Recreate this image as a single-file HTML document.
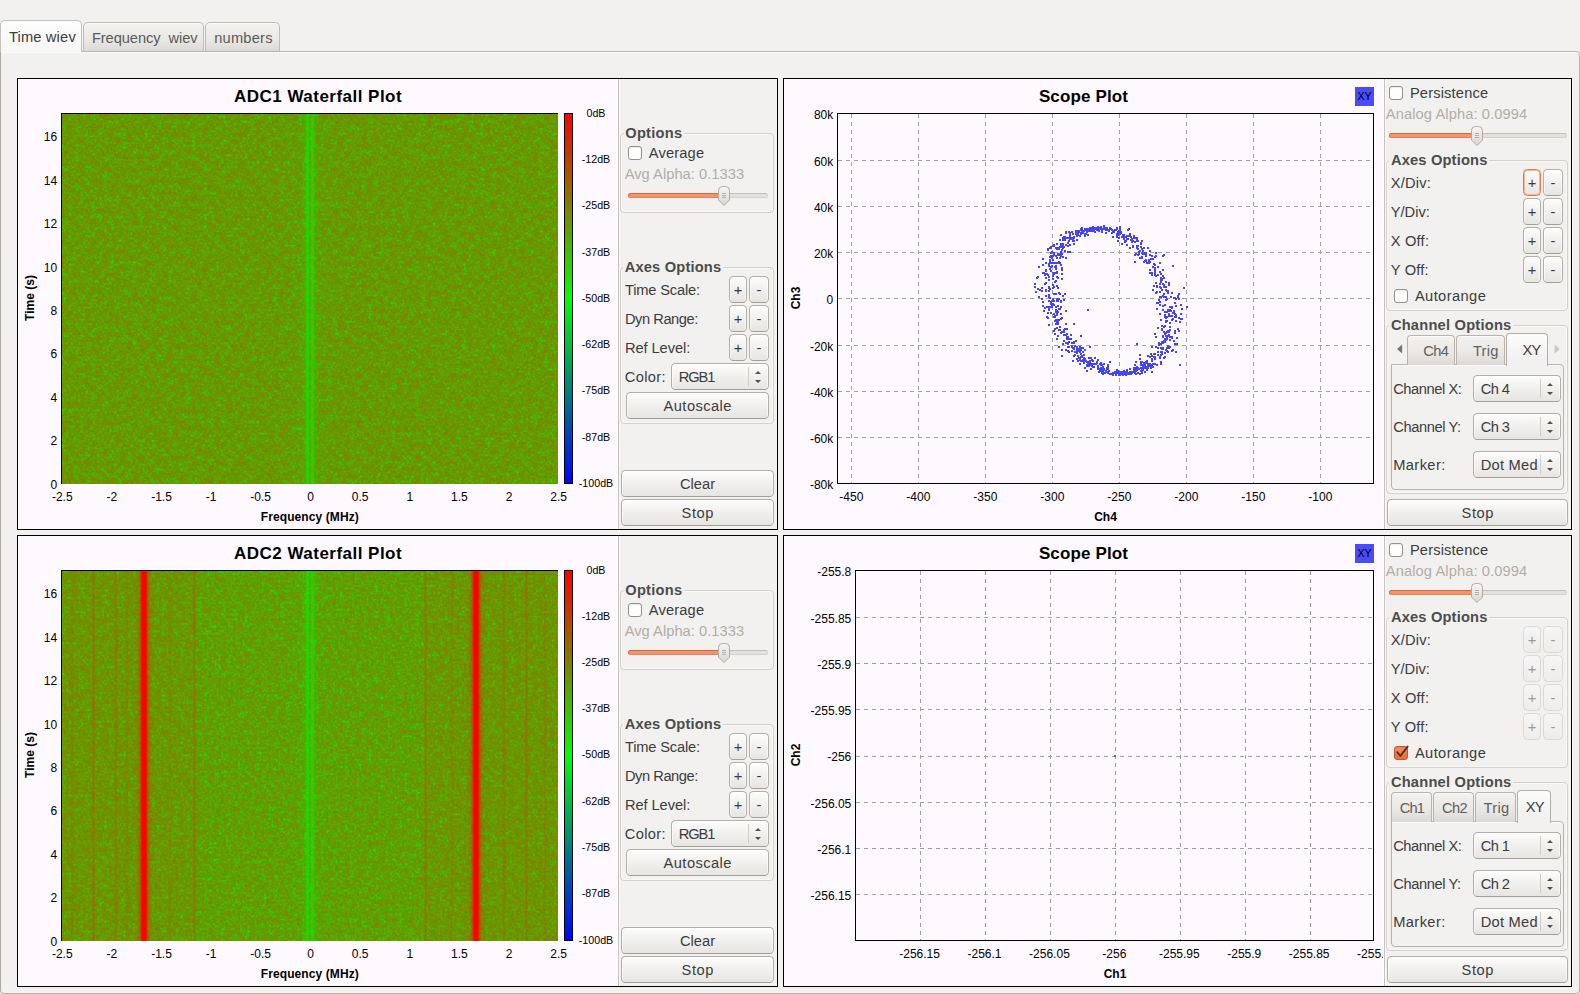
<!DOCTYPE html>
<html lang="en"><head><meta charset="utf-8"><title>Time wiev</title>
<style>
*{box-sizing:border-box;margin:0;padding:0}
html,body{width:1580px;height:994px;overflow:hidden}
body{background:#f2f1f0;font-family:"Liberation Sans",sans-serif;font-size:14.67px;color:#3c3c3c;position:relative}
.a{position:absolute}
.t{position:absolute;white-space:pre;line-height:1;}
.k{color:#000}
.dis{color:#b3ada6}
/* main tab widget */
.pane{position:absolute;left:0;top:51px;width:1580px;height:943px;border:1px solid #b9b4ad;border-left-color:#aeaaa3;border-radius:0 4px 4px 4px;background:#f2f1f0;box-shadow:inset 0 1px 0 #fbfbfa}
.tab{position:absolute;border:1px solid #c1bcb5;border-bottom:none;border-radius:5px 5px 0 0;background:linear-gradient(#f3f2f0,#e9e7e4 60%,#dbd8d4);box-shadow:inset 0 1px 0 #fafaf9}
.tab.on{background:linear-gradient(#fdfdfd,#f6f6f5);border-color:#c6c1bb;z-index:2}
/* plot frames */
.frame{position:absolute;border:1px solid #000;background:#fef9ff;overflow:hidden}
.side{position:absolute;top:0;bottom:0;background:#f2f1f0;border-left:1px solid #c6c2bd;box-shadow:-1px 0 0 #fff,inset 1px 0 0 #f7f7f6}
/* widgets */
.btn{position:absolute;border:1px solid #b3aea8;border-bottom-color:#a49e97;border-radius:4.5px;background:linear-gradient(#fdfdfc,#f2f1ef 45%,#e7e5e2);box-shadow:inset 0 1px 0 #fff,inset 1px 0 0 rgba(255,255,255,.6),inset -1px 0 0 rgba(255,255,255,.6)}
.btn.off{border-color:#dcd9d5;background:linear-gradient(#f6f5f4,#eeedeb);box-shadow:none}
.btn.foc{border-color:#e9764a;box-shadow:inset 0 0 0 1px #f6b79d}
.grp{position:absolute;border:1px solid #d4d0ca;border-radius:4px;box-shadow:inset 0 0 0 1px #f8f8f7}
.cb{position:absolute;width:14px;height:14px;border:1px solid #969089;border-radius:3px;background:linear-gradient(#fff,#fdfdfd);box-shadow:inset 0 1px 1px rgba(0,0,0,.08)}
.cb.on{border-color:#c6562b;background:linear-gradient(#f58e62,#ee6a3c)}
.groove{position:absolute;height:5px;border-radius:3px;border:1px solid #d5d1cc;border-top-color:#c3beb8;background:#e3e1de}
.groove.fill{border-color:#e0693c;border-bottom-color:#e8805a;background:#f2946f}
.sep{position:absolute;width:1px;background:#cfcbc5}
.itab{position:absolute;border:1px solid #b9b3ac;border-bottom:none;border-radius:4px 4px 0 0;background:linear-gradient(#f3f2f0,#e9e7e4 60%,#dcd9d5);box-shadow:inset 0 1px 0 #fafaf9}
.itab.on{background:linear-gradient(#fcfcfb,#f2f1f0 80%);z-index:2;border-color:#b3ada6}
.ipane{position:absolute;border:1px solid #b9b3ac;border-radius:0 4px 4px 4px;background:#f2f1f0;box-shadow:inset 0 1px 0 #fbfbfa}
svg{position:absolute;overflow:visible}
.z3{z-index:4}
</style></head>
<body>
<svg class="a" style="left:0;top:0" width="0" height="0" aria-hidden="true"><defs><linearGradient id="hg" x1="0" y1="0" x2="0" y2="1"><stop offset="0" stop-color="#f7f6f5"/><stop offset="1" stop-color="#d9d6d2"/></linearGradient></defs></svg>
<div class="tab on" style="left:0px;top:20px;width:82px;height:32px;"></div>
<span class="t z3" style="top:30.48px;font-size:14.67px;letter-spacing:0.175px;left:8.90px;">Time wiev</span>
<div class="tab" style="left:83px;top:22px;width:121px;height:30px;"></div>
<span class="t" style="top:31.48px;font-size:14.67px;color:#5a5a5a;letter-spacing:-0.075px;left:91.90px;">Frequency  wiev</span>
<div class="tab" style="left:205px;top:22px;width:75px;height:30px;"></div>
<span class="t" style="top:31.48px;font-size:14.67px;color:#5a5a5a;letter-spacing:0.210px;left:214.20px;">numbers</span>
<div class="pane"></div>
<div class="a" style="left:1px;top:51px;width:80px;height:1px;background:#f6f6f5;z-index:3"></div>
<div class="frame" style="left:17px;top:78px;width:761px;height:452px"><div class="a" style="left:-18px;top:-79px">
<span class="t" style="top:88.11px;font-size:17px;font-weight:700;color:#000;letter-spacing:0.473px;left:234.10px;">ADC1 Waterfall Plot</span>
<div class="a" style="left:61px;top:113px;width:497px;height:371px;border-left:1px solid #000;border-top:1px solid #000;overflow:hidden">
<svg class="a" style="left:0;top:0" width="496" height="370" viewBox="0 0 496 370"><defs><filter id="nz1" x="0" y="0" width="496" height="370" filterUnits="userSpaceOnUse" color-interpolation-filters="sRGB"><feTurbulence type="fractalNoise" baseFrequency="0.42 0.42" numOctaves="2" seed="7"/><feColorMatrix type="matrix" values="1 0 0 0 0 0 1 0 0 0 0 0 1 0 0 0 0 0 0 1" result="a"/><feTurbulence type="fractalNoise" baseFrequency="0.17 0.17" numOctaves="1" seed="47"/><feColorMatrix type="matrix" values="1 0 0 0 0 0 1 0 0 0 0 0 1 0 0 0 0 0 0 1" result="b"/><feComposite in="a" in2="b" operator="arithmetic" k1="0" k2="0.78" k3="0.5" k4="-0.140"/><feComponentTransfer><feFuncR type="table" tableValues="0.018 0.068 0.158 0.268 0.348 0.408 0.453 0.488 0.513 0.528 0.538"/></feComponentTransfer><feColorMatrix type="matrix" values="1 0 0 0 0  -1 0 0 0 1  0 0 0 0 0  0 0 0 0 1"/></filter></defs><rect width="496" height="370" fill="#6b9400"/><rect width="496" height="370" filter="url(#nz1)"/></svg>
<div class="a" style="left:239.00px;top:0;width:18.00px;height:370px;background:linear-gradient(90deg,rgba(10,235,10,0) 0.00%,rgba(10,235,10,0.17) 24.44%,rgba(10,235,10,0.58) 30.56%,rgba(10,235,10,0.62) 41.11%,rgba(10,235,10,0.24) 45.56%,rgba(10,235,10,0.24) 54.44%,rgba(10,235,10,0.62) 58.89%,rgba(10,235,10,0.58) 69.44%,rgba(10,235,10,0.17) 75.56%,rgba(10,235,10,0) 100.00%)"></div>
<div class="a" style="left:218.00px;top:0;width:60.00px;height:370px;background:linear-gradient(90deg,rgba(10,235,10,0) 0.00%,rgba(10,235,10,0.05) 33.33%,rgba(10,235,10,0.05) 66.67%,rgba(10,235,10,0) 100.00%)"></div>
</div>
<span class="t" style="top:478.64px;font-size:12px;color:#000;left:57.20px;transform:translateX(-100%);">0</span>
<span class="t" style="top:435.24px;font-size:12px;color:#000;left:57.20px;transform:translateX(-100%);">2</span>
<span class="t" style="top:391.84px;font-size:12px;color:#000;left:57.20px;transform:translateX(-100%);">4</span>
<span class="t" style="top:348.44px;font-size:12px;color:#000;left:57.20px;transform:translateX(-100%);">6</span>
<span class="t" style="top:305.04px;font-size:12px;color:#000;left:57.20px;transform:translateX(-100%);">8</span>
<span class="t" style="top:261.64px;font-size:12px;color:#000;left:57.20px;transform:translateX(-100%);">10</span>
<span class="t" style="top:218.24px;font-size:12px;color:#000;left:57.20px;transform:translateX(-100%);">12</span>
<span class="t" style="top:174.84px;font-size:12px;color:#000;left:57.20px;transform:translateX(-100%);">14</span>
<span class="t" style="top:131.44px;font-size:12px;color:#000;left:57.20px;transform:translateX(-100%);">16</span>
<span class="t" style="top:491.24px;font-size:12px;color:#000;left:62.30px;transform:translateX(-50%);">-2.5</span>
<span class="t" style="top:491.24px;font-size:12px;color:#000;left:111.90px;transform:translateX(-50%);">-2</span>
<span class="t" style="top:491.24px;font-size:12px;color:#000;left:161.50px;transform:translateX(-50%);">-1.5</span>
<span class="t" style="top:491.24px;font-size:12px;color:#000;left:211.10px;transform:translateX(-50%);">-1</span>
<span class="t" style="top:491.24px;font-size:12px;color:#000;left:260.70px;transform:translateX(-50%);">-0.5</span>
<span class="t" style="top:491.24px;font-size:12px;color:#000;left:310.60px;transform:translateX(-50%);">0</span>
<span class="t" style="top:491.24px;font-size:12px;color:#000;left:360.20px;transform:translateX(-50%);">0.5</span>
<span class="t" style="top:491.24px;font-size:12px;color:#000;left:409.80px;transform:translateX(-50%);">1</span>
<span class="t" style="top:491.24px;font-size:12px;color:#000;left:459.40px;transform:translateX(-50%);">1.5</span>
<span class="t" style="top:491.24px;font-size:12px;color:#000;left:509.00px;transform:translateX(-50%);">2</span>
<span class="t" style="top:491.24px;font-size:12px;color:#000;left:558.60px;transform:translateX(-50%);">2.5</span>
<span class="t" style="top:510.64px;font-size:12px;font-weight:700;color:#000;letter-spacing:0.087px;left:309.84px;transform:translateX(-50%);">Frequency (MHz)</span>
<span class="t k" style="left:30.3px;top:298px;font-size:12px;font-weight:700;transform:translate(-50%,-50%) rotate(-90deg)">Time (s)</span>
<div class="a" style="left:564px;top:113px;width:9px;height:371px;border:1px solid #000;background:linear-gradient(#ff0000,#00ff00 50%,#0000ff)"></div>
<span class="t" style="top:107.87px;font-size:10.67px;color:#000;left:596.00px;transform:translateX(-50%);">0dB</span>
<span class="t" style="top:154.12px;font-size:10.67px;color:#000;left:596.00px;transform:translateX(-50%);">-12dB</span>
<span class="t" style="top:200.37px;font-size:10.67px;color:#000;left:596.00px;transform:translateX(-50%);">-25dB</span>
<span class="t" style="top:246.62px;font-size:10.67px;color:#000;left:596.00px;transform:translateX(-50%);">-37dB</span>
<span class="t" style="top:292.87px;font-size:10.67px;color:#000;left:596.00px;transform:translateX(-50%);">-50dB</span>
<span class="t" style="top:339.12px;font-size:10.67px;color:#000;left:596.00px;transform:translateX(-50%);">-62dB</span>
<span class="t" style="top:385.37px;font-size:10.67px;color:#000;left:596.00px;transform:translateX(-50%);">-75dB</span>
<span class="t" style="top:431.62px;font-size:10.67px;color:#000;left:596.00px;transform:translateX(-50%);">-87dB</span>
<span class="t" style="top:477.87px;font-size:10.67px;color:#000;left:596.00px;transform:translateX(-50%);">-100dB</span>
<div class="side" style="left:618px;top:79px;width:159px;height:450px"></div>
<div class="grp" style="left:620px;top:133px;width:154px;height:80px;"></div>
<div class="a" style="left:623.8px;top:131px;width:60px;height:5px;background:#f2f1f0"></div>
<span class="t" style="top:126.08px;font-size:14.67px;font-weight:700;color:#4c4c4c;letter-spacing:0.232px;left:625.30px;">Options</span>
<div class="cb" style="left:628px;top:146px"></div>
<span class="t" style="top:145.98px;font-size:14.67px;letter-spacing:0.182px;left:648.70px;">Average</span>
<span class="t" style="top:166.98px;font-size:14.67px;color:#b3ada6;letter-spacing:0.040px;left:624.70px;">Avg Alpha: 0.1333</span>
<div class="groove" style="left:628px;top:193px;width:140px"></div>
<div class="groove fill" style="left:628px;top:193px;width:96px"></div>
<svg class="a" style="left:718px;top:186px" width="12" height="20"><path d="M4.5 0.5 H7.5 Q11.5 0.5 11.5 4.5 V14 L6 19.5 L0.5 14 V4.5 Q0.5 0.5 4.5 0.5 Z" fill="url(#hg)" stroke="#b1aba4" stroke-width="1"/><path d="M4 7.5 H8 M4 9.5 H8 M4 11.5 H8" stroke="#b5afa8" stroke-width="1"/></svg>
<div class="grp" style="left:620px;top:267px;width:154px;height:157px;"></div>
<div class="a" style="left:623.2px;top:265px;width:99.8px;height:5px;background:#f2f1f0"></div>
<span class="t" style="top:259.88px;font-size:14.67px;font-weight:700;color:#4c4c4c;letter-spacing:0.176px;left:624.70px;">Axes Options</span>
<span class="t" style="top:283.18px;font-size:14.67px;letter-spacing:-0.168px;left:624.90px;">Time Scale:</span>
<div class="btn" style="left:729px;top:276px;width:18px;height:27px;"></div>
<div class="btn" style="left:749px;top:276px;width:20px;height:27px;"></div>
<span class="t" style="top:282.78px;font-size:14.67px;left:738.00px;transform:translateX(-50%);">+</span>
<span class="t" style="top:282.78px;font-size:14.67px;left:759.00px;transform:translateX(-50%);">-</span>
<span class="t" style="top:312.18px;font-size:14.67px;letter-spacing:-0.441px;left:624.90px;">Dyn Range:</span>
<div class="btn" style="left:729px;top:305px;width:18px;height:27px;"></div>
<div class="btn" style="left:749px;top:305px;width:20px;height:27px;"></div>
<span class="t" style="top:311.78px;font-size:14.67px;left:738.00px;transform:translateX(-50%);">+</span>
<span class="t" style="top:311.78px;font-size:14.67px;left:759.00px;transform:translateX(-50%);">-</span>
<span class="t" style="top:341.18px;font-size:14.67px;letter-spacing:-0.070px;left:624.90px;">Ref Level:</span>
<div class="btn" style="left:729px;top:334px;width:18px;height:27px;"></div>
<div class="btn" style="left:749px;top:334px;width:20px;height:27px;"></div>
<span class="t" style="top:340.78px;font-size:14.67px;left:738.00px;transform:translateX(-50%);">+</span>
<span class="t" style="top:340.78px;font-size:14.67px;left:759.00px;transform:translateX(-50%);">-</span>
<span class="t" style="top:370.48px;font-size:14.67px;letter-spacing:0.382px;left:624.70px;">Color:</span>
<div class="btn" style="left:671px;top:363px;width:98px;height:27px;"></div>
<span class="t" style="top:370.08px;font-size:14.67px;letter-spacing:-1.130px;left:678.80px;">RGB1</span>
<div class="sep" style="left:748px;top:367px;height:19px"></div>
<svg class="a" style="left:754.25px;top:363px" width="8" height="27"><path d="M1 11 L4 8 L7 11 Z M1 17 L4 20 L7 17 Z" fill="#524e4a"/></svg>
<div class="btn " style="left:626px;top:392px;width:143px;height:27px;"></div>
<span class="t" style="top:398.98px;font-size:14.67px;letter-spacing:0.436px;left:697.72px;transform:translateX(-50%);">Autoscale</span>
<div class="btn " style="left:621px;top:470px;width:153px;height:27px;"></div>
<span class="t" style="top:476.98px;font-size:14.67px;letter-spacing:0.034px;left:697.52px;transform:translateX(-50%);">Clear</span>
<div class="btn " style="left:621px;top:499px;width:153px;height:27px;"></div>
<span class="t" style="top:505.98px;font-size:14.67px;letter-spacing:0.561px;left:697.78px;transform:translateX(-50%);">Stop</span>
</div></div>
<div class="frame" style="left:17px;top:535px;width:761px;height:452px"><div class="a" style="left:-18px;top:-536px">
<span class="t" style="top:545.11px;font-size:17px;font-weight:700;color:#000;letter-spacing:0.473px;left:234.10px;">ADC2 Waterfall Plot</span>
<div class="a" style="left:61px;top:570px;width:497px;height:371px;border-left:1px solid #000;border-top:1px solid #000;overflow:hidden">
<svg class="a" style="left:0;top:0" width="496" height="370" viewBox="0 0 496 370"><defs><filter id="nz2" x="0" y="0" width="496" height="370" filterUnits="userSpaceOnUse" color-interpolation-filters="sRGB"><feTurbulence type="fractalNoise" baseFrequency="0.42 0.42" numOctaves="2" seed="23"/><feColorMatrix type="matrix" values="1 0 0 0 0 0 1 0 0 0 0 0 1 0 0 0 0 0 0 1" result="a"/><feTurbulence type="fractalNoise" baseFrequency="0.17 0.17" numOctaves="1" seed="63"/><feColorMatrix type="matrix" values="1 0 0 0 0 0 1 0 0 0 0 0 1 0 0 0 0 0 0 1" result="b"/><feComposite in="a" in2="b" operator="arithmetic" k1="0" k2="0.78" k3="0.5" k4="-0.140"/><feComponentTransfer><feFuncR type="table" tableValues="0.000 0.045 0.135 0.245 0.325 0.385 0.430 0.465 0.490 0.505 0.515"/></feComponentTransfer><feColorMatrix type="matrix" values="1 0 0 0 0  -1 0 0 0 1  0 0 0 0 0  0 0 0 0 1"/></filter></defs><rect width="496" height="370" fill="#6b9400"/><rect width="496" height="370" filter="url(#nz2)"/></svg>
<div class="a" style="left:239.00px;top:0;width:18.00px;height:370px;background:linear-gradient(90deg,rgba(10,235,10,0) 0.00%,rgba(10,235,10,0.17) 24.44%,rgba(10,235,10,0.58) 30.56%,rgba(10,235,10,0.62) 41.11%,rgba(10,235,10,0.24) 45.56%,rgba(10,235,10,0.24) 54.44%,rgba(10,235,10,0.62) 58.89%,rgba(10,235,10,0.58) 69.44%,rgba(10,235,10,0.17) 75.56%,rgba(10,235,10,0) 100.00%)"></div>
<div class="a" style="left:218.00px;top:0;width:60.00px;height:370px;background:linear-gradient(90deg,rgba(10,235,10,0) 0.00%,rgba(10,235,10,0.05) 33.33%,rgba(10,235,10,0.05) 66.67%,rgba(10,235,10,0) 100.00%)"></div>
<div class="a" style="left:0.00px;top:0;width:133.50px;height:370px;background:linear-gradient(90deg,rgba(185,85,0,0.13) 0.00%,rgba(185,85,0,0.1) 98.13%,rgba(185,85,0,0) 100.00%)"></div>
<div class="a" style="left:362.50px;top:0;width:133.50px;height:370px;background:linear-gradient(90deg,rgba(185,85,0,0) 0.00%,rgba(185,85,0,0.1) 1.87%,rgba(185,85,0,0.13) 100.00%)"></div>
<div class="a" style="left:73.30px;top:0;width:18.00px;height:370px;background:linear-gradient(90deg,rgba(255,0,0,0) 0.00%,rgba(255,0,0,0.14) 19.44%,rgba(255,0,0,0.36) 28.89%,rgba(255,0,0,0.72) 35.00%,rgba(255,0,0,1) 40.56%,rgba(255,0,0,1) 59.44%,rgba(255,0,0,0.72) 65.00%,rgba(255,0,0,0.36) 71.11%,rgba(255,0,0,0.14) 80.56%,rgba(255,0,0,0) 100.00%)"></div>
<div class="a" style="left:405.00px;top:0;width:18.00px;height:370px;background:linear-gradient(90deg,rgba(255,0,0,0) 0.00%,rgba(255,0,0,0.14) 19.44%,rgba(255,0,0,0.36) 28.89%,rgba(255,0,0,0.72) 35.00%,rgba(255,0,0,1) 40.56%,rgba(255,0,0,1) 59.44%,rgba(255,0,0,0.72) 65.00%,rgba(255,0,0,0.36) 71.11%,rgba(255,0,0,0.14) 80.56%,rgba(255,0,0,0) 100.00%)"></div>
<div class="a" style="left:29.80px;top:0;width:3.20px;height:370px;background:linear-gradient(90deg,rgba(175,85,0,0) 0.00%,rgba(175,85,0,0.5) 31.25%,rgba(175,85,0,0.5) 68.75%,rgba(175,85,0,0) 100.00%)"></div>
<div class="a" style="left:52.40px;top:0;width:3.20px;height:370px;background:linear-gradient(90deg,rgba(175,85,0,0) 0.00%,rgba(175,85,0,0.3) 31.25%,rgba(175,85,0,0.3) 68.75%,rgba(175,85,0,0) 100.00%)"></div>
<div class="a" style="left:63.40px;top:0;width:3.20px;height:370px;background:linear-gradient(90deg,rgba(175,85,0,0) 0.00%,rgba(175,85,0,0.2) 31.25%,rgba(175,85,0,0.2) 68.75%,rgba(175,85,0,0) 100.00%)"></div>
<div class="a" style="left:131.00px;top:0;width:3.20px;height:370px;background:linear-gradient(90deg,rgba(175,85,0,0) 0.00%,rgba(175,85,0,0.5) 31.25%,rgba(175,85,0,0.5) 68.75%,rgba(175,85,0,0) 100.00%)"></div>
<div class="a" style="left:362.30px;top:0;width:3.20px;height:370px;background:linear-gradient(90deg,rgba(175,85,0,0) 0.00%,rgba(175,85,0,0.5) 31.25%,rgba(175,85,0,0.5) 68.75%,rgba(175,85,0,0) 100.00%)"></div>
<div class="a" style="left:440.40px;top:0;width:3.20px;height:370px;background:linear-gradient(90deg,rgba(175,85,0,0) 0.00%,rgba(175,85,0,0.3) 31.25%,rgba(175,85,0,0.3) 68.75%,rgba(175,85,0,0) 100.00%)"></div>
<div class="a" style="left:463.20px;top:0;width:3.20px;height:370px;background:linear-gradient(90deg,rgba(175,85,0,0) 0.00%,rgba(175,85,0,0.45) 31.25%,rgba(175,85,0,0.45) 68.75%,rgba(175,85,0,0) 100.00%)"></div>
<div class="a" style="left:8.40px;top:0;width:3.20px;height:370px;background:linear-gradient(90deg,rgba(175,85,0,0) 0.00%,rgba(175,85,0,0.2) 31.25%,rgba(175,85,0,0.2) 68.75%,rgba(175,85,0,0) 100.00%)"></div>
<div class="a" style="left:106.40px;top:0;width:3.20px;height:370px;background:linear-gradient(90deg,rgba(175,85,0,0) 0.00%,rgba(175,85,0,0.15) 31.25%,rgba(175,85,0,0.15) 68.75%,rgba(175,85,0,0) 100.00%)"></div>
<div class="a" style="left:388.40px;top:0;width:3.20px;height:370px;background:linear-gradient(90deg,rgba(175,85,0,0) 0.00%,rgba(175,85,0,0.2) 31.25%,rgba(175,85,0,0.2) 68.75%,rgba(175,85,0,0) 100.00%)"></div>
<div class="a" style="left:481.40px;top:0;width:3.20px;height:370px;background:linear-gradient(90deg,rgba(175,85,0,0) 0.00%,rgba(175,85,0,0.2) 31.25%,rgba(175,85,0,0.2) 68.75%,rgba(175,85,0,0) 100.00%)"></div>
</div>
<span class="t" style="top:935.64px;font-size:12px;color:#000;left:57.20px;transform:translateX(-100%);">0</span>
<span class="t" style="top:892.24px;font-size:12px;color:#000;left:57.20px;transform:translateX(-100%);">2</span>
<span class="t" style="top:848.84px;font-size:12px;color:#000;left:57.20px;transform:translateX(-100%);">4</span>
<span class="t" style="top:805.44px;font-size:12px;color:#000;left:57.20px;transform:translateX(-100%);">6</span>
<span class="t" style="top:762.04px;font-size:12px;color:#000;left:57.20px;transform:translateX(-100%);">8</span>
<span class="t" style="top:718.64px;font-size:12px;color:#000;left:57.20px;transform:translateX(-100%);">10</span>
<span class="t" style="top:675.24px;font-size:12px;color:#000;left:57.20px;transform:translateX(-100%);">12</span>
<span class="t" style="top:631.84px;font-size:12px;color:#000;left:57.20px;transform:translateX(-100%);">14</span>
<span class="t" style="top:588.44px;font-size:12px;color:#000;left:57.20px;transform:translateX(-100%);">16</span>
<span class="t" style="top:948.24px;font-size:12px;color:#000;left:62.30px;transform:translateX(-50%);">-2.5</span>
<span class="t" style="top:948.24px;font-size:12px;color:#000;left:111.90px;transform:translateX(-50%);">-2</span>
<span class="t" style="top:948.24px;font-size:12px;color:#000;left:161.50px;transform:translateX(-50%);">-1.5</span>
<span class="t" style="top:948.24px;font-size:12px;color:#000;left:211.10px;transform:translateX(-50%);">-1</span>
<span class="t" style="top:948.24px;font-size:12px;color:#000;left:260.70px;transform:translateX(-50%);">-0.5</span>
<span class="t" style="top:948.24px;font-size:12px;color:#000;left:310.60px;transform:translateX(-50%);">0</span>
<span class="t" style="top:948.24px;font-size:12px;color:#000;left:360.20px;transform:translateX(-50%);">0.5</span>
<span class="t" style="top:948.24px;font-size:12px;color:#000;left:409.80px;transform:translateX(-50%);">1</span>
<span class="t" style="top:948.24px;font-size:12px;color:#000;left:459.40px;transform:translateX(-50%);">1.5</span>
<span class="t" style="top:948.24px;font-size:12px;color:#000;left:509.00px;transform:translateX(-50%);">2</span>
<span class="t" style="top:948.24px;font-size:12px;color:#000;left:558.60px;transform:translateX(-50%);">2.5</span>
<span class="t" style="top:967.64px;font-size:12px;font-weight:700;color:#000;letter-spacing:0.087px;left:309.84px;transform:translateX(-50%);">Frequency (MHz)</span>
<span class="t k" style="left:30.3px;top:755px;font-size:12px;font-weight:700;transform:translate(-50%,-50%) rotate(-90deg)">Time (s)</span>
<div class="a" style="left:564px;top:570px;width:9px;height:371px;border:1px solid #000;background:linear-gradient(#ff0000,#00ff00 50%,#0000ff)"></div>
<span class="t" style="top:564.87px;font-size:10.67px;color:#000;left:596.00px;transform:translateX(-50%);">0dB</span>
<span class="t" style="top:610.52px;font-size:10.67px;color:#000;left:596.00px;transform:translateX(-50%);">-12dB</span>
<span class="t" style="top:656.77px;font-size:10.67px;color:#000;left:596.00px;transform:translateX(-50%);">-25dB</span>
<span class="t" style="top:703.02px;font-size:10.67px;color:#000;left:596.00px;transform:translateX(-50%);">-37dB</span>
<span class="t" style="top:749.27px;font-size:10.67px;color:#000;left:596.00px;transform:translateX(-50%);">-50dB</span>
<span class="t" style="top:795.52px;font-size:10.67px;color:#000;left:596.00px;transform:translateX(-50%);">-62dB</span>
<span class="t" style="top:841.77px;font-size:10.67px;color:#000;left:596.00px;transform:translateX(-50%);">-75dB</span>
<span class="t" style="top:888.02px;font-size:10.67px;color:#000;left:596.00px;transform:translateX(-50%);">-87dB</span>
<span class="t" style="top:934.87px;font-size:10.67px;color:#000;left:596.00px;transform:translateX(-50%);">-100dB</span>
<div class="side" style="left:618px;top:536px;width:159px;height:450px"></div>
<div class="grp" style="left:620px;top:590px;width:154px;height:80px;"></div>
<div class="a" style="left:623.8px;top:588px;width:60px;height:5px;background:#f2f1f0"></div>
<span class="t" style="top:583.08px;font-size:14.67px;font-weight:700;color:#4c4c4c;letter-spacing:0.232px;left:625.30px;">Options</span>
<div class="cb" style="left:628px;top:603px"></div>
<span class="t" style="top:602.98px;font-size:14.67px;letter-spacing:0.182px;left:648.70px;">Average</span>
<span class="t" style="top:623.98px;font-size:14.67px;color:#b3ada6;letter-spacing:0.040px;left:624.70px;">Avg Alpha: 0.1333</span>
<div class="groove" style="left:628px;top:650px;width:140px"></div>
<div class="groove fill" style="left:628px;top:650px;width:96px"></div>
<svg class="a" style="left:718px;top:643px" width="12" height="20"><path d="M4.5 0.5 H7.5 Q11.5 0.5 11.5 4.5 V14 L6 19.5 L0.5 14 V4.5 Q0.5 0.5 4.5 0.5 Z" fill="url(#hg)" stroke="#b1aba4" stroke-width="1"/><path d="M4 7.5 H8 M4 9.5 H8 M4 11.5 H8" stroke="#b5afa8" stroke-width="1"/></svg>
<div class="grp" style="left:620px;top:724px;width:154px;height:157px;"></div>
<div class="a" style="left:623.2px;top:722px;width:99.8px;height:5px;background:#f2f1f0"></div>
<span class="t" style="top:716.88px;font-size:14.67px;font-weight:700;color:#4c4c4c;letter-spacing:0.176px;left:624.70px;">Axes Options</span>
<span class="t" style="top:740.18px;font-size:14.67px;letter-spacing:-0.168px;left:624.90px;">Time Scale:</span>
<div class="btn" style="left:729px;top:733px;width:18px;height:27px;"></div>
<div class="btn" style="left:749px;top:733px;width:20px;height:27px;"></div>
<span class="t" style="top:739.78px;font-size:14.67px;left:738.00px;transform:translateX(-50%);">+</span>
<span class="t" style="top:739.78px;font-size:14.67px;left:759.00px;transform:translateX(-50%);">-</span>
<span class="t" style="top:769.18px;font-size:14.67px;letter-spacing:-0.441px;left:624.90px;">Dyn Range:</span>
<div class="btn" style="left:729px;top:762px;width:18px;height:27px;"></div>
<div class="btn" style="left:749px;top:762px;width:20px;height:27px;"></div>
<span class="t" style="top:768.78px;font-size:14.67px;left:738.00px;transform:translateX(-50%);">+</span>
<span class="t" style="top:768.78px;font-size:14.67px;left:759.00px;transform:translateX(-50%);">-</span>
<span class="t" style="top:798.18px;font-size:14.67px;letter-spacing:-0.070px;left:624.90px;">Ref Level:</span>
<div class="btn" style="left:729px;top:791px;width:18px;height:27px;"></div>
<div class="btn" style="left:749px;top:791px;width:20px;height:27px;"></div>
<span class="t" style="top:797.78px;font-size:14.67px;left:738.00px;transform:translateX(-50%);">+</span>
<span class="t" style="top:797.78px;font-size:14.67px;left:759.00px;transform:translateX(-50%);">-</span>
<span class="t" style="top:827.48px;font-size:14.67px;letter-spacing:0.382px;left:624.70px;">Color:</span>
<div class="btn" style="left:671px;top:820px;width:98px;height:27px;"></div>
<span class="t" style="top:827.08px;font-size:14.67px;letter-spacing:-1.130px;left:678.80px;">RGB1</span>
<div class="sep" style="left:748px;top:824px;height:19px"></div>
<svg class="a" style="left:754.25px;top:820px" width="8" height="27"><path d="M1 11 L4 8 L7 11 Z M1 17 L4 20 L7 17 Z" fill="#524e4a"/></svg>
<div class="btn " style="left:626px;top:849px;width:143px;height:27px;"></div>
<span class="t" style="top:855.98px;font-size:14.67px;letter-spacing:0.436px;left:697.72px;transform:translateX(-50%);">Autoscale</span>
<div class="btn " style="left:621px;top:927px;width:153px;height:27px;"></div>
<span class="t" style="top:933.98px;font-size:14.67px;letter-spacing:0.034px;left:697.52px;transform:translateX(-50%);">Clear</span>
<div class="btn " style="left:621px;top:956px;width:153px;height:27px;"></div>
<span class="t" style="top:962.98px;font-size:14.67px;letter-spacing:0.561px;left:697.78px;transform:translateX(-50%);">Stop</span>
</div></div>
<div class="frame" style="left:783px;top:78px;width:789px;height:452px"><div class="a" style="left:-784px;top:-79px">
<span class="t" style="top:88.11px;font-size:17px;font-weight:700;color:#000;letter-spacing:0.144px;left:1038.90px;">Scope Plot</span>
<div class="a" style="left:1355px;top:87px;width:19px;height:19px;background:#4b4bfc"></div>
<span class="t" style="top:91.17px;font-size:10.67px;color:#000;left:1364.50px;transform:translateX(-50%);">XY</span>
<svg class="a" style="left:837px;top:113px" width="537" height="371" shape-rendering="crispEdges"><path d="M14.5 1V370M81.5 1V370M148.5 1V370M215.5 1V370M282.5 1V370M349.5 1V370M416.5 1V370M483.5 1V370" stroke="#a0a0a4" stroke-width="1" stroke-dasharray="4 4" fill="none"/><path d="M1 47.5H536M1 93.5H536M1 139.5H536M1 185.5H536M1 232.5H536M1 278.5H536M1 324.5H536" stroke="#a0a0a4" stroke-width="1" stroke-dasharray="4 4" fill="none"/><rect x="0.5" y="0.5" width="536" height="370" fill="none" stroke="#000" stroke-width="1"/></svg>
<svg class="a" style="left:0;top:0" width="1580" height="600" shape-rendering="crispEdges"><path d="M1069 251h2v2h-2zM1071 238h2v2h-2zM1143 261h2v2h-2zM1043 310h2v2h-2zM1161 325h2v2h-2zM1101 367h2v2h-2zM1094 231h2v2h-2zM1180 313h2v2h-2zM1140 243h2v2h-2zM1056 319h2v2h-2zM1099 363h2v2h-2zM1152 363h2v2h-2zM1125 240h2v2h-2zM1175 298h2v2h-2zM1144 252h2v2h-2zM1091 230h2v2h-2zM1178 317h2v2h-2zM1064 236h2v2h-2zM1160 287h2v2h-2zM1060 252h2v2h-2zM1087 362h2v2h-2zM1167 330h2v2h-2zM1050 301h2v2h-2zM1052 284h2v2h-2zM1151 272h2v2h-2zM1162 335h2v2h-2zM1164 304h2v2h-2zM1078 357h2v2h-2zM1086 361h2v2h-2zM1126 238h2v2h-2zM1153 356h2v2h-2zM1082 360h2v2h-2zM1050 255h2v2h-2zM1073 341h2v2h-2zM1166 298h2v2h-2zM1051 265h2v2h-2zM1109 228h2v2h-2zM1061 355h2v2h-2zM1063 331h2v2h-2zM1082 232h2v2h-2zM1155 282h2v2h-2zM1141 240h2v2h-2zM1059 254h2v2h-2zM1118 373h2v2h-2zM1159 271h2v2h-2zM1076 235h2v2h-2zM1151 274h2v2h-2zM1047 249h2v2h-2zM1041 298h2v2h-2zM1067 251h2v2h-2zM1080 233h2v2h-2zM1055 272h2v2h-2zM1148 260h2v2h-2zM1169 336h2v2h-2zM1088 229h2v2h-2zM1165 289h2v2h-2zM1136 247h2v2h-2zM1180 318h2v2h-2zM1160 343h2v2h-2zM1147 366h2v2h-2zM1112 372h2v2h-2zM1118 230h2v2h-2zM1082 359h2v2h-2zM1153 363h2v2h-2zM1165 349h2v2h-2zM1085 228h2v2h-2zM1161 329h2v2h-2zM1121 371h2v2h-2zM1180 304h2v2h-2zM1125 236h2v2h-2zM1117 234h2v2h-2zM1125 373h2v2h-2zM1056 312h2v2h-2zM1145 259h2v2h-2zM1116 236h2v2h-2zM1071 345h2v2h-2zM1160 319h2v2h-2zM1163 326h2v2h-2zM1053 252h2v2h-2zM1100 228h2v2h-2zM1108 230h2v2h-2zM1173 310h2v2h-2zM1060 243h2v2h-2zM1072 233h2v2h-2zM1064 238h2v2h-2zM1135 373h2v2h-2zM1112 374h2v2h-2zM1037 288h2v2h-2zM1151 360h2v2h-2zM1163 293h2v2h-2zM1122 373h2v2h-2zM1164 316h2v2h-2zM1080 335h2v2h-2zM1071 346h2v2h-2zM1077 355h2v2h-2zM1119 226h2v2h-2zM1173 340h2v2h-2zM1169 329h2v2h-2zM1064 239h2v2h-2zM1073 355h2v2h-2zM1108 370h2v2h-2zM1077 234h2v2h-2zM1127 238h2v2h-2zM1042 272h2v2h-2zM1175 305h2v2h-2zM1076 358h2v2h-2zM1104 227h2v2h-2zM1061 246h2v2h-2zM1076 346h2v2h-2zM1068 351h2v2h-2zM1164 333h2v2h-2zM1111 229h2v2h-2zM1101 369h2v2h-2zM1124 371h2v2h-2zM1119 372h2v2h-2zM1083 230h2v2h-2zM1057 335h2v2h-2zM1045 273h2v2h-2zM1170 315h2v2h-2zM1129 371h2v2h-2zM1141 256h2v2h-2zM1181 308h2v2h-2zM1130 371h2v2h-2zM1065 334h2v2h-2zM1078 348h2v2h-2zM1067 242h2v2h-2zM1071 350h2v2h-2zM1064 250h2v2h-2zM1162 342h2v2h-2zM1154 333h2v2h-2zM1066 333h2v2h-2zM1056 248h2v2h-2zM1112 230h2v2h-2zM1068 240h2v2h-2zM1162 309h2v2h-2zM1062 244h2v2h-2zM1107 364h2v2h-2zM1169 309h2v2h-2zM1078 349h2v2h-2zM1152 258h2v2h-2zM1163 340h2v2h-2zM1061 249h2v2h-2zM1102 228h2v2h-2zM1048 279h2v2h-2zM1097 229h2v2h-2zM1061 267h2v2h-2zM1053 254h2v2h-2zM1090 227h2v2h-2zM1162 305h2v2h-2zM1138 253h2v2h-2zM1159 301h2v2h-2zM1130 236h2v2h-2zM1136 369h2v2h-2zM1169 315h2v2h-2zM1143 364h2v2h-2zM1100 364h2v2h-2zM1058 292h2v2h-2zM1065 231h2v2h-2zM1059 262h2v2h-2zM1172 265h2v2h-2zM1078 231h2v2h-2zM1114 371h2v2h-2zM1140 370h2v2h-2zM1082 351h2v2h-2zM1119 230h2v2h-2zM1166 316h2v2h-2zM1089 357h2v2h-2zM1155 275h2v2h-2zM1086 229h2v2h-2zM1164 356h2v2h-2zM1154 353h2v2h-2zM1171 336h2v2h-2zM1158 344h2v2h-2zM1166 320h2v2h-2zM1060 255h2v2h-2zM1051 304h2v2h-2zM1105 227h2v2h-2zM1154 269h2v2h-2zM1091 363h2v2h-2zM1150 258h2v2h-2zM1160 361h2v2h-2zM1084 235h2v2h-2zM1046 316h2v2h-2zM1065 310h2v2h-2zM1167 290h2v2h-2zM1144 364h2v2h-2zM1067 350h2v2h-2zM1075 230h2v2h-2zM1069 238h2v2h-2zM1159 313h2v2h-2zM1170 310h2v2h-2zM1154 273h2v2h-2zM1059 239h2v2h-2zM1153 285h2v2h-2zM1062 295h2v2h-2zM1057 300h2v2h-2zM1166 347h2v2h-2zM1141 372h2v2h-2zM1088 365h2v2h-2zM1151 364h2v2h-2zM1081 360h2v2h-2zM1116 370h2v2h-2zM1167 292h2v2h-2zM1160 277h2v2h-2zM1103 228h2v2h-2zM1168 282h2v2h-2zM1050 270h2v2h-2zM1134 237h2v2h-2zM1051 262h2v2h-2zM1128 373h2v2h-2zM1060 251h2v2h-2zM1144 367h2v2h-2zM1151 255h2v2h-2zM1130 373h2v2h-2zM1090 228h2v2h-2zM1147 247h2v2h-2zM1096 228h2v2h-2zM1049 260h2v2h-2zM1059 293h2v2h-2zM1052 278h2v2h-2zM1140 367h2v2h-2zM1134 261h2v2h-2zM1176 343h2v2h-2zM1139 373h2v2h-2zM1099 370h2v2h-2zM1058 329h2v2h-2zM1090 364h2v2h-2zM1055 267h2v2h-2zM1133 369h2v2h-2zM1058 248h2v2h-2zM1066 338h2v2h-2zM1052 259h2v2h-2zM1162 295h2v2h-2zM1142 369h2v2h-2zM1054 333h2v2h-2zM1067 342h2v2h-2zM1147 365h2v2h-2zM1166 350h2v2h-2zM1057 311h2v2h-2zM1101 364h2v2h-2zM1106 367h2v2h-2zM1039 289h2v2h-2zM1087 309h2v2h-2zM1053 304h2v2h-2zM1107 229h2v2h-2zM1168 334h2v2h-2zM1162 347h2v2h-2zM1049 259h2v2h-2zM1136 238h2v2h-2zM1057 323h2v2h-2zM1057 277h2v2h-2zM1077 360h2v2h-2zM1174 297h2v2h-2zM1110 373h2v2h-2zM1123 371h2v2h-2zM1152 289h2v2h-2zM1089 227h2v2h-2zM1119 373h2v2h-2zM1140 364h2v2h-2zM1116 371h2v2h-2zM1045 290h2v2h-2zM1141 252h2v2h-2zM1045 282h2v2h-2zM1171 337h2v2h-2zM1143 247h2v2h-2zM1167 335h2v2h-2zM1139 257h2v2h-2zM1149 365h2v2h-2zM1067 346h2v2h-2zM1142 365h2v2h-2zM1061 331h2v2h-2zM1072 240h2v2h-2zM1167 331h2v2h-2zM1051 251h2v2h-2zM1169 322h2v2h-2zM1145 252h2v2h-2zM1105 232h2v2h-2zM1127 229h2v2h-2zM1132 240h2v2h-2zM1078 230h2v2h-2zM1160 351h2v2h-2zM1146 368h2v2h-2zM1177 296h2v2h-2zM1136 245h2v2h-2zM1050 256h2v2h-2zM1119 228h2v2h-2zM1053 313h2v2h-2zM1154 358h2v2h-2zM1162 255h2v2h-2zM1131 241h2v2h-2zM1071 237h2v2h-2zM1053 244h2v2h-2zM1088 230h2v2h-2zM1091 227h2v2h-2zM1056 285h2v2h-2zM1164 311h2v2h-2zM1079 359h2v2h-2zM1146 361h2v2h-2zM1095 228h2v2h-2zM1056 310h2v2h-2zM1097 226h2v2h-2zM1053 262h2v2h-2zM1162 283h2v2h-2zM1075 232h2v2h-2zM1116 227h2v2h-2zM1054 272h2v2h-2zM1057 299h2v2h-2zM1116 233h2v2h-2zM1134 364h2v2h-2zM1160 281h2v2h-2zM1148 259h2v2h-2zM1098 368h2v2h-2zM1097 365h2v2h-2zM1046 306h2v2h-2zM1053 293h2v2h-2zM1149 363h2v2h-2zM1135 361h2v2h-2zM1153 263h2v2h-2zM1168 315h2v2h-2zM1058 319h2v2h-2zM1157 266h2v2h-2zM1171 306h2v2h-2zM1155 292h2v2h-2zM1141 368h2v2h-2zM1100 227h2v2h-2zM1080 229h2v2h-2zM1152 266h2v2h-2zM1156 302h2v2h-2zM1159 304h2v2h-2zM1061 317h2v2h-2zM1117 240h2v2h-2zM1147 363h2v2h-2zM1124 240h2v2h-2zM1133 367h2v2h-2zM1099 228h2v2h-2zM1050 306h2v2h-2zM1174 330h2v2h-2zM1048 276h2v2h-2zM1155 336h2v2h-2zM1055 306h2v2h-2zM1116 228h2v2h-2zM1084 359h2v2h-2zM1059 257h2v2h-2zM1058 261h2v2h-2zM1178 293h2v2h-2zM1048 265h2v2h-2zM1103 363h2v2h-2zM1065 244h2v2h-2zM1154 274h2v2h-2zM1149 250h2v2h-2zM1048 300h2v2h-2zM1132 371h2v2h-2zM1139 358h2v2h-2zM1043 272h2v2h-2zM1171 319h2v2h-2zM1155 252h2v2h-2zM1062 239h2v2h-2zM1172 312h2v2h-2zM1107 366h2v2h-2zM1059 246h2v2h-2zM1101 368h2v2h-2zM1151 358h2v2h-2zM1118 374h2v2h-2zM1081 227h2v2h-2zM1138 368h2v2h-2zM1047 248h2v2h-2zM1154 256h2v2h-2zM1126 371h2v2h-2zM1162 336h2v2h-2zM1115 372h2v2h-2zM1158 342h2v2h-2zM1159 286h2v2h-2zM1062 246h2v2h-2zM1104 228h2v2h-2zM1060 234h2v2h-2zM1120 373h2v2h-2zM1163 286h2v2h-2zM1056 257h2v2h-2zM1168 347h2v2h-2zM1134 367h2v2h-2zM1084 367h2v2h-2zM1131 238h2v2h-2zM1163 331h2v2h-2zM1128 228h2v2h-2zM1087 364h2v2h-2zM1089 229h2v2h-2zM1137 367h2v2h-2zM1104 372h2v2h-2zM1054 316h2v2h-2zM1049 297h2v2h-2zM1165 321h2v2h-2zM1070 237h2v2h-2zM1083 357h2v2h-2zM1048 287h2v2h-2zM1073 237h2v2h-2zM1079 351h2v2h-2zM1144 366h2v2h-2zM1080 353h2v2h-2zM1119 374h2v2h-2zM1065 342h2v2h-2zM1161 352h2v2h-2zM1163 277h2v2h-2zM1151 346h2v2h-2zM1034 283h2v2h-2zM1041 287h2v2h-2zM1034 286h2v2h-2zM1134 369h2v2h-2zM1122 372h2v2h-2zM1048 309h2v2h-2zM1069 233h2v2h-2zM1122 236h2v2h-2zM1053 316h2v2h-2zM1144 363h2v2h-2zM1048 290h2v2h-2zM1090 357h2v2h-2zM1053 286h2v2h-2zM1109 373h2v2h-2zM1123 234h2v2h-2zM1165 339h2v2h-2zM1055 280h2v2h-2zM1056 272h2v2h-2zM1047 274h2v2h-2zM1076 239h2v2h-2zM1161 351h2v2h-2zM1157 354h2v2h-2zM1136 237h2v2h-2zM1055 323h2v2h-2zM1163 284h2v2h-2zM1149 272h2v2h-2zM1080 360h2v2h-2zM1070 334h2v2h-2zM1093 228h2v2h-2zM1097 367h2v2h-2zM1122 374h2v2h-2zM1056 321h2v2h-2zM1092 230h2v2h-2zM1045 289h2v2h-2zM1160 279h2v2h-2zM1132 246h2v2h-2zM1050 247h2v2h-2zM1106 227h2v2h-2zM1052 245h2v2h-2zM1168 284h2v2h-2zM1057 262h2v2h-2zM1051 257h2v2h-2zM1154 264h2v2h-2zM1154 356h2v2h-2zM1092 360h2v2h-2zM1131 372h2v2h-2zM1164 314h2v2h-2zM1106 371h2v2h-2zM1068 341h2v2h-2zM1081 230h2v2h-2zM1181 318h2v2h-2zM1042 305h2v2h-2zM1052 272h2v2h-2zM1160 273h2v2h-2zM1084 228h2v2h-2zM1175 314h2v2h-2zM1061 269h2v2h-2zM1079 363h2v2h-2zM1087 234h2v2h-2zM1084 233h2v2h-2zM1144 260h2v2h-2zM1165 286h2v2h-2zM1081 356h2v2h-2zM1045 269h2v2h-2zM1141 257h2v2h-2zM1107 368h2v2h-2zM1049 288h2v2h-2zM1074 351h2v2h-2zM1079 346h2v2h-2zM1135 253h2v2h-2zM1161 278h2v2h-2zM1061 349h2v2h-2zM1109 361h2v2h-2zM1050 252h2v2h-2zM1112 236h2v2h-2zM1159 296h2v2h-2zM1056 243h2v2h-2zM1092 229h2v2h-2zM1066 328h2v2h-2zM1135 370h2v2h-2zM1053 245h2v2h-2zM1171 315h2v2h-2zM1073 342h2v2h-2zM1137 240h2v2h-2zM1163 357h2v2h-2zM1049 262h2v2h-2zM1156 286h2v2h-2zM1121 243h2v2h-2zM1091 365h2v2h-2zM1094 227h2v2h-2zM1162 348h2v2h-2zM1038 296h2v2h-2zM1165 296h2v2h-2zM1086 365h2v2h-2zM1123 236h2v2h-2zM1115 374h2v2h-2zM1136 368h2v2h-2zM1125 374h2v2h-2zM1183 287h2v2h-2zM1177 295h2v2h-2zM1150 367h2v2h-2zM1062 237h2v2h-2zM1080 349h2v2h-2zM1113 372h2v2h-2zM1056 327h2v2h-2zM1081 229h2v2h-2zM1113 231h2v2h-2zM1137 372h2v2h-2zM1088 364h2v2h-2zM1052 275h2v2h-2zM1077 232h2v2h-2zM1053 330h2v2h-2zM1168 331h2v2h-2zM1098 371h2v2h-2zM1050 303h2v2h-2zM1120 232h2v2h-2zM1115 371h2v2h-2zM1118 231h2v2h-2zM1116 372h2v2h-2zM1126 369h2v2h-2zM1128 372h2v2h-2zM1068 346h2v2h-2zM1054 315h2v2h-2zM1047 317h2v2h-2zM1165 335h2v2h-2zM1073 348h2v2h-2zM1097 359h2v2h-2zM1179 321h2v2h-2zM1166 337h2v2h-2zM1056 276h2v2h-2zM1076 232h2v2h-2zM1096 229h2v2h-2zM1055 311h2v2h-2zM1109 227h2v2h-2zM1155 346h2v2h-2zM1154 267h2v2h-2zM1160 354h2v2h-2zM1098 228h2v2h-2zM1052 287h2v2h-2zM1134 254h2v2h-2zM1051 305h2v2h-2zM1142 367h2v2h-2zM1121 236h2v2h-2zM1073 243h2v2h-2zM1047 312h2v2h-2zM1166 331h2v2h-2zM1100 226h2v2h-2zM1054 293h2v2h-2zM1150 353h2v2h-2zM1092 366h2v2h-2zM1161 279h2v2h-2zM1142 250h2v2h-2zM1101 229h2v2h-2zM1044 273h2v2h-2zM1076 348h2v2h-2zM1172 349h2v2h-2zM1139 354h2v2h-2zM1118 237h2v2h-2zM1085 360h2v2h-2zM1101 372h2v2h-2zM1165 299h2v2h-2zM1042 301h2v2h-2zM1122 371h2v2h-2zM1048 286h2v2h-2zM1058 262h2v2h-2zM1093 229h2v2h-2zM1167 309h2v2h-2zM1149 269h2v2h-2zM1165 317h2v2h-2zM1041 290h2v2h-2zM1065 257h2v2h-2zM1102 366h2v2h-2zM1048 296h2v2h-2zM1100 362h2v2h-2zM1103 227h2v2h-2zM1142 364h2v2h-2zM1171 350h2v2h-2zM1080 347h2v2h-2zM1084 358h2v2h-2zM1045 295h2v2h-2zM1057 287h2v2h-2zM1083 362h2v2h-2zM1088 362h2v2h-2zM1096 361h2v2h-2zM1062 243h2v2h-2zM1035 291h2v2h-2zM1090 230h2v2h-2zM1063 236h2v2h-2zM1062 256h2v2h-2zM1066 237h2v2h-2zM1048 307h2v2h-2zM1092 226h2v2h-2zM1166 290h2v2h-2zM1178 330h2v2h-2zM1133 235h2v2h-2zM1163 296h2v2h-2zM1057 254h2v2h-2zM1161 341h2v2h-2zM1063 299h2v2h-2zM1095 363h2v2h-2zM1063 340h2v2h-2zM1157 347h2v2h-2zM1118 371h2v2h-2zM1122 234h2v2h-2zM1118 372h2v2h-2zM1173 312h2v2h-2zM1075 340h2v2h-2zM1061 253h2v2h-2zM1146 262h2v2h-2zM1159 283h2v2h-2zM1060 300h2v2h-2zM1086 231h2v2h-2zM1119 371h2v2h-2zM1124 241h2v2h-2zM1145 361h2v2h-2zM1046 273h2v2h-2zM1161 353h2v2h-2zM1089 228h2v2h-2zM1103 368h2v2h-2zM1117 370h2v2h-2zM1144 371h2v2h-2zM1081 228h2v2h-2zM1175 320h2v2h-2zM1042 264h2v2h-2zM1138 251h2v2h-2zM1162 269h2v2h-2zM1072 360h2v2h-2zM1159 357h2v2h-2zM1080 232h2v2h-2zM1119 233h2v2h-2zM1141 248h2v2h-2zM1057 321h2v2h-2zM1160 296h2v2h-2zM1161 328h2v2h-2zM1055 293h2v2h-2zM1088 228h2v2h-2zM1141 361h2v2h-2zM1085 229h2v2h-2zM1049 256h2v2h-2zM1174 343h2v2h-2zM1055 262h2v2h-2zM1130 239h2v2h-2zM1103 369h2v2h-2zM1057 247h2v2h-2zM1037 276h2v2h-2zM1056 313h2v2h-2zM1079 357h2v2h-2zM1105 229h2v2h-2zM1169 339h2v2h-2zM1044 283h2v2h-2zM1167 345h2v2h-2zM1054 328h2v2h-2zM1098 230h2v2h-2zM1123 238h2v2h-2zM1100 369h2v2h-2zM1134 241h2v2h-2zM1101 231h2v2h-2zM1116 369h2v2h-2zM1167 351h2v2h-2zM1143 367h2v2h-2zM1143 362h2v2h-2zM1064 328h2v2h-2zM1178 298h2v2h-2zM1164 325h2v2h-2zM1179 364h2v2h-2zM1123 373h2v2h-2zM1091 228h2v2h-2zM1137 245h2v2h-2zM1065 323h2v2h-2zM1056 298h2v2h-2zM1140 246h2v2h-2zM1120 231h2v2h-2zM1073 236h2v2h-2zM1123 372h2v2h-2zM1050 312h2v2h-2zM1045 262h2v2h-2zM1165 281h2v2h-2zM1173 297h2v2h-2zM1160 347h2v2h-2zM1171 307h2v2h-2zM1088 357h2v2h-2zM1145 255h2v2h-2zM1077 350h2v2h-2zM1058 346h2v2h-2zM1048 306h2v2h-2zM1048 294h2v2h-2zM1129 247h2v2h-2zM1137 254h2v2h-2zM1072 347h2v2h-2zM1137 248h2v2h-2zM1100 367h2v2h-2zM1084 349h2v2h-2zM1099 227h2v2h-2zM1156 291h2v2h-2zM1070 338h2v2h-2zM1166 311h2v2h-2zM1074 354h2v2h-2zM1057 305h2v2h-2zM1134 370h2v2h-2zM1065 349h2v2h-2zM1174 332h2v2h-2zM1139 250h2v2h-2zM1140 242h2v2h-2zM1055 247h2v2h-2zM1154 270h2v2h-2zM1073 323h2v2h-2zM1163 254h2v2h-2zM1050 266h2v2h-2zM1058 308h2v2h-2zM1128 235h2v2h-2zM1159 356h2v2h-2zM1088 361h2v2h-2zM1145 366h2v2h-2zM1168 310h2v2h-2zM1089 362h2v2h-2zM1116 234h2v2h-2zM1118 232h2v2h-2zM1076 352h2v2h-2zM1059 329h2v2h-2zM1129 234h2v2h-2zM1069 232h2v2h-2zM1083 354h2v2h-2zM1071 231h2v2h-2zM1134 372h2v2h-2zM1156 364h2v2h-2zM1175 351h2v2h-2zM1096 227h2v2h-2zM1060 313h2v2h-2zM1174 316h2v2h-2zM1126 372h2v2h-2zM1169 326h2v2h-2zM1063 329h2v2h-2zM1164 341h2v2h-2zM1103 372h2v2h-2zM1044 307h2v2h-2zM1126 244h2v2h-2zM1051 300h2v2h-2zM1079 235h2v2h-2zM1165 332h2v2h-2zM1105 370h2v2h-2zM1055 255h2v2h-2zM1129 233h2v2h-2zM1066 337h2v2h-2zM1060 306h2v2h-2zM1107 372h2v2h-2zM1169 310h2v2h-2zM1159 262h2v2h-2zM1152 366h2v2h-2zM1081 355h2v2h-2zM1062 247h2v2h-2zM1156 308h2v2h-2zM1136 366h2v2h-2zM1157 302h2v2h-2zM1155 255h2v2h-2zM1059 326h2v2h-2zM1127 373h2v2h-2zM1091 359h2v2h-2zM1048 263h2v2h-2zM1045 270h2v2h-2zM1143 366h2v2h-2zM1149 356h2v2h-2zM1080 356h2v2h-2zM1129 368h2v2h-2zM1058 253h2v2h-2zM1068 338h2v2h-2zM1060 301h2v2h-2zM1105 228h2v2h-2zM1140 363h2v2h-2zM1114 229h2v2h-2zM1157 351h2v2h-2zM1161 289h2v2h-2zM1176 337h2v2h-2zM1075 233h2v2h-2zM1056 338h2v2h-2zM1054 281h2v2h-2zM1146 369h2v2h-2zM1060 245h2v2h-2zM1137 368h2v2h-2zM1142 253h2v2h-2zM1160 363h2v2h-2zM1170 296h2v2h-2zM1120 371h2v2h-2zM1093 363h2v2h-2zM1145 260h2v2h-2zM1154 363h2v2h-2zM1114 372h2v2h-2zM1069 235h2v2h-2zM1080 228h2v2h-2zM1067 336h2v2h-2zM1171 292h2v2h-2zM1050 246h2v2h-2zM1062 343h2v2h-2zM1054 320h2v2h-2zM1052 262h2v2h-2zM1169 346h2v2h-2zM1157 327h2v2h-2zM1174 302h2v2h-2zM1053 273h2v2h-2zM1074 345h2v2h-2zM1048 324h2v2h-2zM1082 347h2v2h-2zM1052 298h2v2h-2zM1094 357h2v2h-2zM1089 346h2v2h-2zM1089 360h2v2h-2zM1131 371h2v2h-2zM1086 370h2v2h-2zM1186 306h2v2h-2zM1042 258h2v2h-2zM1082 230h2v2h-2zM1144 253h2v2h-2zM1052 255h2v2h-2zM1071 342h2v2h-2zM1093 366h2v2h-2zM1136 240h2v2h-2zM1106 368h2v2h-2zM1126 235h2v2h-2zM1132 245h2v2h-2zM1123 370h2v2h-2zM1147 367h2v2h-2zM1038 266h2v2h-2zM1063 246h2v2h-2zM1164 352h2v2h-2zM1063 334h2v2h-2zM1055 309h2v2h-2zM1086 364h2v2h-2zM1049 268h2v2h-2zM1057 253h2v2h-2zM1073 347h2v2h-2zM1164 338h2v2h-2zM1059 308h2v2h-2zM1156 285h2v2h-2zM1175 316h2v2h-2zM1065 232h2v2h-2zM1060 332h2v2h-2zM1055 268h2v2h-2zM1096 362h2v2h-2zM1083 361h2v2h-2zM1151 371h2v2h-2zM1174 313h2v2h-2zM1085 233h2v2h-2zM1115 229h2v2h-2zM1141 371h2v2h-2zM1056 314h2v2h-2zM1146 362h2v2h-2zM1147 355h2v2h-2zM1111 232h2v2h-2zM1157 274h2v2h-2zM1177 328h2v2h-2zM1101 370h2v2h-2zM1054 266h2v2h-2zM1145 254h2v2h-2zM1067 343h2v2h-2zM1159 291h2v2h-2zM1148 364h2v2h-2zM1077 230h2v2h-2zM1146 360h2v2h-2zM1164 339h2v2h-2zM1162 275h2v2h-2zM1166 338h2v2h-2zM1150 366h2v2h-2zM1082 231h2v2h-2zM1136 343h2v2h-2zM1168 335h2v2h-2zM1140 361h2v2h-2zM1076 350h2v2h-2zM1052 303h2v2h-2zM1097 368h2v2h-2zM1051 306h2v2h-2zM1165 320h2v2h-2zM1083 359h2v2h-2zM1103 225h2v2h-2zM1053 300h2v2h-2zM1172 318h2v2h-2zM1148 262h2v2h-2zM1056 271h2v2h-2zM1077 231h2v2h-2zM1056 300h2v2h-2zM1149 254h2v2h-2zM1067 245h2v2h-2zM1102 370h2v2h-2zM1158 299h2v2h-2zM1154 272h2v2h-2zM1049 247h2v2h-2zM1168 313h2v2h-2zM1058 298h2v2h-2zM1055 265h2v2h-2zM1068 237h2v2h-2zM1061 278h2v2h-2zM1133 237h2v2h-2zM1069 244h2v2h-2zM1169 306h2v2h-2zM1036 277h2v2h-2zM1135 368h2v2h-2zM1153 353h2v2h-2zM1117 231h2v2h-2zM1055 319h2v2h-2zM1060 264h2v2h-2zM1151 355h2v2h-2zM1060 318h2v2h-2zM1061 273h2v2h-2zM1102 373h2v2h-2zM1044 274h2v2h-2zM1161 348h2v2h-2zM1072 238h2v2h-2zM1066 336h2v2h-2zM1149 261h2v2h-2zM1090 368h2v2h-2zM1068 231h2v2h-2zM1045 277h2v2h-2zM1064 293h2v2h-2zM1110 228h2v2h-2zM1119 232h2v2h-2zM1073 240h2v2h-2zM1086 228h2v2h-2z" fill="#4545f6"/></svg>
<span class="t" style="top:109.34px;font-size:12px;color:#000;left:833.30px;transform:translateX(-100%);">80k</span>
<span class="t" style="top:155.59px;font-size:12px;color:#000;left:833.30px;transform:translateX(-100%);">60k</span>
<span class="t" style="top:201.84px;font-size:12px;color:#000;left:833.30px;transform:translateX(-100%);">40k</span>
<span class="t" style="top:248.09px;font-size:12px;color:#000;left:833.30px;transform:translateX(-100%);">20k</span>
<span class="t" style="top:294.34px;font-size:12px;color:#000;left:833.30px;transform:translateX(-100%);">0</span>
<span class="t" style="top:340.59px;font-size:12px;color:#000;left:833.30px;transform:translateX(-100%);">-20k</span>
<span class="t" style="top:386.84px;font-size:12px;color:#000;left:833.30px;transform:translateX(-100%);">-40k</span>
<span class="t" style="top:433.09px;font-size:12px;color:#000;left:833.30px;transform:translateX(-100%);">-60k</span>
<span class="t" style="top:479.34px;font-size:12px;color:#000;left:833.30px;transform:translateX(-100%);">-80k</span>
<span class="t" style="top:491.24px;font-size:12px;color:#000;left:851.30px;transform:translateX(-50%);">-450</span>
<span class="t" style="top:491.24px;font-size:12px;color:#000;left:918.30px;transform:translateX(-50%);">-400</span>
<span class="t" style="top:491.24px;font-size:12px;color:#000;left:985.30px;transform:translateX(-50%);">-350</span>
<span class="t" style="top:491.24px;font-size:12px;color:#000;left:1052.30px;transform:translateX(-50%);">-300</span>
<span class="t" style="top:491.24px;font-size:12px;color:#000;left:1119.30px;transform:translateX(-50%);">-250</span>
<span class="t" style="top:491.24px;font-size:12px;color:#000;left:1186.30px;transform:translateX(-50%);">-200</span>
<span class="t" style="top:491.24px;font-size:12px;color:#000;left:1253.30px;transform:translateX(-50%);">-150</span>
<span class="t" style="top:491.24px;font-size:12px;color:#000;left:1320.30px;transform:translateX(-50%);">-100</span>
<span class="t" style="top:510.64px;font-size:12px;font-weight:700;color:#000;left:1105.50px;transform:translateX(-50%);">Ch4</span>
<span class="t k" style="left:796px;top:298px;font-size:12px;font-weight:700;transform:translate(-50%,-50%) rotate(-90deg)">Ch3</span>
<div class="side" style="left:1384px;top:79px;width:187px;height:450px"></div>
<div class="cb" style="left:1389px;top:86px"></div>
<span class="t" style="top:86.08px;font-size:14.67px;letter-spacing:0.166px;left:1409.90px;">Persistence</span>
<span class="t" style="top:107.28px;font-size:14.67px;color:#b3ada6;letter-spacing:0.107px;left:1385.80px;">Analog Alpha: 0.0994</span>
<div class="groove" style="left:1389px;top:133px;width:178px"></div>
<div class="groove fill" style="left:1389px;top:133px;width:88px"></div>
<svg class="a" style="left:1471px;top:126px" width="12" height="20"><path d="M4.5 0.5 H7.5 Q11.5 0.5 11.5 4.5 V14 L6 19.5 L0.5 14 V4.5 Q0.5 0.5 4.5 0.5 Z" fill="url(#hg)" stroke="#b1aba4" stroke-width="1"/><path d="M4 7.5 H8 M4 9.5 H8 M4 11.5 H8" stroke="#b5afa8" stroke-width="1"/></svg>
<div class="grp" style="left:1386px;top:160px;width:182px;height:151px;"></div>
<div class="a" style="left:1389.4px;top:158px;width:99.6px;height:5px;background:#f2f1f0"></div>
<span class="t" style="top:153.48px;font-size:14.67px;font-weight:700;color:#4c4c4c;letter-spacing:0.176px;left:1390.90px;">Axes Options</span>
<span class="t" style="top:176.38px;font-size:14.67px;letter-spacing:0.234px;left:1390.70px;">X/Div:</span>
<div class="btn foc" style="left:1523px;top:169px;width:18px;height:27px;"></div>
<div class="btn" style="left:1543px;top:169px;width:20px;height:27px;"></div>
<span class="t" style="top:175.78px;font-size:14.67px;left:1532.00px;transform:translateX(-50%);">+</span>
<span class="t" style="top:175.78px;font-size:14.67px;left:1553.00px;transform:translateX(-50%);">-</span>
<span class="t" style="top:205.38px;font-size:14.67px;letter-spacing:0.018px;left:1390.70px;">Y/Div:</span>
<div class="btn" style="left:1523px;top:198px;width:18px;height:27px;"></div>
<div class="btn" style="left:1543px;top:198px;width:20px;height:27px;"></div>
<span class="t" style="top:204.78px;font-size:14.67px;left:1532.00px;transform:translateX(-50%);">+</span>
<span class="t" style="top:204.78px;font-size:14.67px;left:1553.00px;transform:translateX(-50%);">-</span>
<span class="t" style="top:234.38px;font-size:14.67px;letter-spacing:0.216px;left:1390.70px;">X Off:</span>
<div class="btn" style="left:1523px;top:227px;width:18px;height:27px;"></div>
<div class="btn" style="left:1543px;top:227px;width:20px;height:27px;"></div>
<span class="t" style="top:233.78px;font-size:14.67px;left:1532.00px;transform:translateX(-50%);">+</span>
<span class="t" style="top:233.78px;font-size:14.67px;left:1553.00px;transform:translateX(-50%);">-</span>
<span class="t" style="top:263.38px;font-size:14.67px;letter-spacing:0.210px;left:1390.70px;">Y Off:</span>
<div class="btn" style="left:1523px;top:256px;width:18px;height:27px;"></div>
<div class="btn" style="left:1543px;top:256px;width:20px;height:27px;"></div>
<span class="t" style="top:262.78px;font-size:14.67px;left:1532.00px;transform:translateX(-50%);">+</span>
<span class="t" style="top:262.78px;font-size:14.67px;left:1553.00px;transform:translateX(-50%);">-</span>
<div class="cb" style="left:1394px;top:289px"></div>
<span class="t" style="top:289.08px;font-size:14.67px;letter-spacing:0.407px;left:1414.90px;">Autorange</span>
<div class="grp" style="left:1386px;top:325px;width:182px;height:169px;"></div>
<div class="a" style="left:1389.4px;top:323px;width:123.6px;height:5px;background:#f2f1f0"></div>
<span class="t" style="top:318.08px;font-size:14.67px;font-weight:700;color:#4c4c4c;letter-spacing:0.223px;left:1390.90px;">Channel Options</span>
<div class="ipane" style="left:1391px;top:364px;width:173px;height:126px;"></div>
<svg class="a" style="left:0;top:0" width="1580" height="994"><path d="M1402.1 344.5 L1397.1 349 L1402.1 353.5 Z" fill="#77726c"/></svg>
<svg class="a" style="left:0;top:0" width="1580" height="994"><path d="M1554.7 344.5 L1559.7 349 L1554.7 353.5 Z" fill="#c9c5bf"/></svg>
<div class="itab" style="left:1407px;top:335px;width:48px;height:30px;"></div>
<span class="t" style="top:344.18px;font-size:14.67px;color:#5f5f5f;letter-spacing:-0.630px;left:1423.20px;">Ch4</span>
<div class="itab" style="left:1456px;top:335px;width:49px;height:30px;"></div>
<span class="t" style="top:344.18px;font-size:14.67px;color:#5f5f5f;letter-spacing:0.299px;left:1472.90px;">Trig</span>
<div class="itab on" style="left:1506px;top:333px;width:42px;height:33px;"></div>
<span class="t z3" style="top:343.28px;font-size:14.67px;letter-spacing:-0.731px;left:1522.50px;">XY</span>
<div class="a" style="left:1507px;top:364px;width:40px;height:2px;background:#f2f1f0;z-index:3"></div>
<span class="t" style="top:382.18px;font-size:14.67px;letter-spacing:-0.422px;left:1393.20px;">Channel X:</span>
<div class="btn" style="left:1473px;top:375px;width:88px;height:27px;"></div>
<span class="t" style="top:382.08px;font-size:14.67px;letter-spacing:-0.592px;left:1480.80px;">Ch 4</span>
<div class="sep" style="left:1540px;top:379px;height:19px"></div>
<svg class="a" style="left:1546.25px;top:375px" width="8" height="27"><path d="M1 11 L4 8 L7 11 Z M1 17 L4 20 L7 17 Z" fill="#524e4a"/></svg>
<span class="t" style="top:420.08px;font-size:14.67px;letter-spacing:-0.395px;left:1393.20px;">Channel Y:</span>
<div class="btn" style="left:1473px;top:413px;width:88px;height:27px;"></div>
<span class="t" style="top:420.08px;font-size:14.67px;letter-spacing:-0.592px;left:1480.80px;">Ch 3</span>
<div class="sep" style="left:1540px;top:417px;height:19px"></div>
<svg class="a" style="left:1546.25px;top:413px" width="8" height="27"><path d="M1 11 L4 8 L7 11 Z M1 17 L4 20 L7 17 Z" fill="#524e4a"/></svg>
<span class="t" style="top:458.48px;font-size:14.67px;letter-spacing:0.402px;left:1393.20px;">Marker:</span>
<div class="btn" style="left:1473px;top:451px;width:88px;height:27px;"></div>
<span class="t" style="top:458.08px;font-size:14.67px;letter-spacing:0.230px;left:1480.80px;">Dot Med</span>
<div class="sep" style="left:1540px;top:455px;height:19px"></div>
<svg class="a" style="left:1546.25px;top:451px" width="8" height="27"><path d="M1 11 L4 8 L7 11 Z M1 17 L4 20 L7 17 Z" fill="#524e4a"/></svg>
<div class="btn " style="left:1387px;top:499px;width:181px;height:27px;"></div>
<span class="t" style="top:505.98px;font-size:14.67px;letter-spacing:0.561px;left:1477.78px;transform:translateX(-50%);">Stop</span>
</div></div>
<div class="frame" style="left:783px;top:535px;width:789px;height:452px"><div class="a" style="left:-784px;top:-536px">
<span class="t" style="top:545.11px;font-size:17px;font-weight:700;color:#000;letter-spacing:0.144px;left:1038.90px;">Scope Plot</span>
<div class="a" style="left:1355px;top:544px;width:19px;height:19px;background:#4b4bfc"></div>
<span class="t" style="top:548.17px;font-size:10.67px;color:#000;left:1364.50px;transform:translateX(-50%);">XY</span>
<svg class="a" style="left:855px;top:570px" width="519" height="371" shape-rendering="crispEdges"><path d="M65.5 1V370M130.5 1V370M195.5 1V370M260.5 1V370M325.5 1V370M390.5 1V370M455.5 1V370" stroke="#a0a0a4" stroke-width="1" stroke-dasharray="4 4" fill="none"/><path d="M1 47.5H518M1 93.5H518M1 139.5H518M1 186.5H518M1 232.5H518M1 278.5H518M1 324.5H518" stroke="#a0a0a4" stroke-width="1" stroke-dasharray="4 4" fill="none"/><rect x="0.5" y="0.5" width="518" height="370" fill="none" stroke="#000" stroke-width="1"/></svg>
<div class="a" style="left:1114px;top:755px;width:2px;height:2px;background:#4545f6;opacity:.8"></div>
<span class="t" style="top:566.34px;font-size:12px;color:#000;left:851.30px;transform:translateX(-100%);">-255.8</span>
<span class="t" style="top:612.59px;font-size:12px;color:#000;left:851.30px;transform:translateX(-100%);">-255.85</span>
<span class="t" style="top:658.84px;font-size:12px;color:#000;left:851.30px;transform:translateX(-100%);">-255.9</span>
<span class="t" style="top:705.09px;font-size:12px;color:#000;left:851.30px;transform:translateX(-100%);">-255.95</span>
<span class="t" style="top:751.34px;font-size:12px;color:#000;left:851.30px;transform:translateX(-100%);">-256</span>
<span class="t" style="top:797.59px;font-size:12px;color:#000;left:851.30px;transform:translateX(-100%);">-256.05</span>
<span class="t" style="top:843.84px;font-size:12px;color:#000;left:851.30px;transform:translateX(-100%);">-256.1</span>
<span class="t" style="top:890.09px;font-size:12px;color:#000;left:851.30px;transform:translateX(-100%);">-256.15</span>
<span class="t" style="top:948.24px;font-size:12px;color:#000;left:919.60px;transform:translateX(-50%);">-256.15</span>
<span class="t" style="top:948.24px;font-size:12px;color:#000;left:984.53px;transform:translateX(-50%);">-256.1</span>
<span class="t" style="top:948.24px;font-size:12px;color:#000;left:1049.46px;transform:translateX(-50%);">-256.05</span>
<span class="t" style="top:948.24px;font-size:12px;color:#000;left:1114.39px;transform:translateX(-50%);">-256</span>
<span class="t" style="top:948.24px;font-size:12px;color:#000;left:1179.32px;transform:translateX(-50%);">-255.95</span>
<span class="t" style="top:948.24px;font-size:12px;color:#000;left:1244.25px;transform:translateX(-50%);">-255.9</span>
<span class="t" style="top:948.24px;font-size:12px;color:#000;left:1309.18px;transform:translateX(-50%);">-255.85</span>
<span class="t" style="top:948.24px;font-size:12px;color:#000;left:1374.11px;transform:translateX(-50%);">-255.8</span>
<span class="t" style="top:967.64px;font-size:12px;font-weight:700;color:#000;left:1115.00px;transform:translateX(-50%);">Ch1</span>
<span class="t k" style="left:796px;top:755px;font-size:12px;font-weight:700;transform:translate(-50%,-50%) rotate(-90deg)">Ch2</span>
<div class="side" style="left:1384px;top:536px;width:187px;height:450px"></div>
<div class="cb" style="left:1389px;top:543px"></div>
<span class="t" style="top:543.08px;font-size:14.67px;letter-spacing:0.166px;left:1409.90px;">Persistence</span>
<span class="t" style="top:564.28px;font-size:14.67px;color:#b3ada6;letter-spacing:0.107px;left:1385.80px;">Analog Alpha: 0.0994</span>
<div class="groove" style="left:1389px;top:590px;width:178px"></div>
<div class="groove fill" style="left:1389px;top:590px;width:88px"></div>
<svg class="a" style="left:1471px;top:583px" width="12" height="20"><path d="M4.5 0.5 H7.5 Q11.5 0.5 11.5 4.5 V14 L6 19.5 L0.5 14 V4.5 Q0.5 0.5 4.5 0.5 Z" fill="url(#hg)" stroke="#b1aba4" stroke-width="1"/><path d="M4 7.5 H8 M4 9.5 H8 M4 11.5 H8" stroke="#b5afa8" stroke-width="1"/></svg>
<div class="grp" style="left:1386px;top:617px;width:182px;height:151px;"></div>
<div class="a" style="left:1389.4px;top:615px;width:99.6px;height:5px;background:#f2f1f0"></div>
<span class="t" style="top:610.48px;font-size:14.67px;font-weight:700;color:#4c4c4c;letter-spacing:0.176px;left:1390.90px;">Axes Options</span>
<span class="t" style="top:633.38px;font-size:14.67px;letter-spacing:0.234px;left:1390.70px;">X/Div:</span>
<div class="btn off" style="left:1523px;top:626px;width:18px;height:27px;"></div>
<div class="btn off" style="left:1543px;top:626px;width:20px;height:27px;"></div>
<span class="t" style="top:632.78px;font-size:14.67px;color:#9c9791;left:1532.00px;transform:translateX(-50%);">+</span>
<span class="t" style="top:632.78px;font-size:14.67px;color:#9c9791;left:1553.00px;transform:translateX(-50%);">-</span>
<span class="t" style="top:662.38px;font-size:14.67px;letter-spacing:0.018px;left:1390.70px;">Y/Div:</span>
<div class="btn off" style="left:1523px;top:655px;width:18px;height:27px;"></div>
<div class="btn off" style="left:1543px;top:655px;width:20px;height:27px;"></div>
<span class="t" style="top:661.78px;font-size:14.67px;color:#9c9791;left:1532.00px;transform:translateX(-50%);">+</span>
<span class="t" style="top:661.78px;font-size:14.67px;color:#9c9791;left:1553.00px;transform:translateX(-50%);">-</span>
<span class="t" style="top:691.38px;font-size:14.67px;letter-spacing:0.216px;left:1390.70px;">X Off:</span>
<div class="btn off" style="left:1523px;top:684px;width:18px;height:27px;"></div>
<div class="btn off" style="left:1543px;top:684px;width:20px;height:27px;"></div>
<span class="t" style="top:690.78px;font-size:14.67px;color:#9c9791;left:1532.00px;transform:translateX(-50%);">+</span>
<span class="t" style="top:690.78px;font-size:14.67px;color:#9c9791;left:1553.00px;transform:translateX(-50%);">-</span>
<span class="t" style="top:720.38px;font-size:14.67px;letter-spacing:0.210px;left:1390.70px;">Y Off:</span>
<div class="btn off" style="left:1523px;top:713px;width:18px;height:27px;"></div>
<div class="btn off" style="left:1543px;top:713px;width:20px;height:27px;"></div>
<span class="t" style="top:719.78px;font-size:14.67px;color:#9c9791;left:1532.00px;transform:translateX(-50%);">+</span>
<span class="t" style="top:719.78px;font-size:14.67px;color:#9c9791;left:1553.00px;transform:translateX(-50%);">-</span>
<div class="cb on" style="left:1394px;top:746px"></div>
<svg class="a" style="left:1394px;top:744px" width="16" height="16"><path d="M3.2 8.2 L6.3 12 L13.6 2.6" fill="none" stroke="#5a2e18" stroke-width="1.9" stroke-linecap="round" stroke-linejoin="round"/></svg>
<span class="t" style="top:746.08px;font-size:14.67px;letter-spacing:0.407px;left:1414.90px;">Autorange</span>
<div class="grp" style="left:1386px;top:782px;width:182px;height:169px;"></div>
<div class="a" style="left:1389.4px;top:780px;width:123.6px;height:5px;background:#f2f1f0"></div>
<span class="t" style="top:775.08px;font-size:14.67px;font-weight:700;color:#4c4c4c;letter-spacing:0.223px;left:1390.90px;">Channel Options</span>
<div class="ipane" style="left:1391px;top:821px;width:173px;height:126px;"></div>
<div class="itab" style="left:1391px;top:792px;width:41px;height:30px;"></div>
<span class="t" style="top:801.18px;font-size:14.67px;color:#5f5f5f;letter-spacing:-0.830px;left:1399.80px;">Ch1</span>
<div class="itab" style="left:1433px;top:792px;width:41px;height:30px;"></div>
<span class="t" style="top:801.18px;font-size:14.67px;color:#5f5f5f;letter-spacing:-0.597px;left:1441.90px;">Ch2</span>
<div class="itab" style="left:1475px;top:792px;width:41px;height:30px;"></div>
<span class="t" style="top:801.18px;font-size:14.67px;color:#5f5f5f;letter-spacing:0.299px;left:1483.50px;">Trig</span>
<div class="itab on" style="left:1517px;top:790px;width:34px;height:33px;"></div>
<span class="t z3" style="top:800.28px;font-size:14.67px;letter-spacing:-0.731px;left:1525.70px;">XY</span>
<div class="a" style="left:1518px;top:821px;width:32px;height:2px;background:#f2f1f0;z-index:3"></div>
<span class="t" style="top:839.18px;font-size:14.67px;letter-spacing:-0.422px;left:1393.20px;">Channel X:</span>
<div class="btn" style="left:1473px;top:832px;width:88px;height:27px;"></div>
<span class="t" style="top:839.08px;font-size:14.67px;letter-spacing:-0.592px;left:1480.80px;">Ch 1</span>
<div class="sep" style="left:1540px;top:836px;height:19px"></div>
<svg class="a" style="left:1546.25px;top:832px" width="8" height="27"><path d="M1 11 L4 8 L7 11 Z M1 17 L4 20 L7 17 Z" fill="#524e4a"/></svg>
<span class="t" style="top:877.08px;font-size:14.67px;letter-spacing:-0.395px;left:1393.20px;">Channel Y:</span>
<div class="btn" style="left:1473px;top:870px;width:88px;height:27px;"></div>
<span class="t" style="top:877.08px;font-size:14.67px;letter-spacing:-0.592px;left:1480.80px;">Ch 2</span>
<div class="sep" style="left:1540px;top:874px;height:19px"></div>
<svg class="a" style="left:1546.25px;top:870px" width="8" height="27"><path d="M1 11 L4 8 L7 11 Z M1 17 L4 20 L7 17 Z" fill="#524e4a"/></svg>
<span class="t" style="top:915.48px;font-size:14.67px;letter-spacing:0.402px;left:1393.20px;">Marker:</span>
<div class="btn" style="left:1473px;top:908px;width:88px;height:27px;"></div>
<span class="t" style="top:915.08px;font-size:14.67px;letter-spacing:0.230px;left:1480.80px;">Dot Med</span>
<div class="sep" style="left:1540px;top:912px;height:19px"></div>
<svg class="a" style="left:1546.25px;top:908px" width="8" height="27"><path d="M1 11 L4 8 L7 11 Z M1 17 L4 20 L7 17 Z" fill="#524e4a"/></svg>
<div class="btn " style="left:1387px;top:956px;width:181px;height:27px;"></div>
<span class="t" style="top:962.98px;font-size:14.67px;letter-spacing:0.561px;left:1477.78px;transform:translateX(-50%);">Stop</span>
</div></div>
</body></html>
